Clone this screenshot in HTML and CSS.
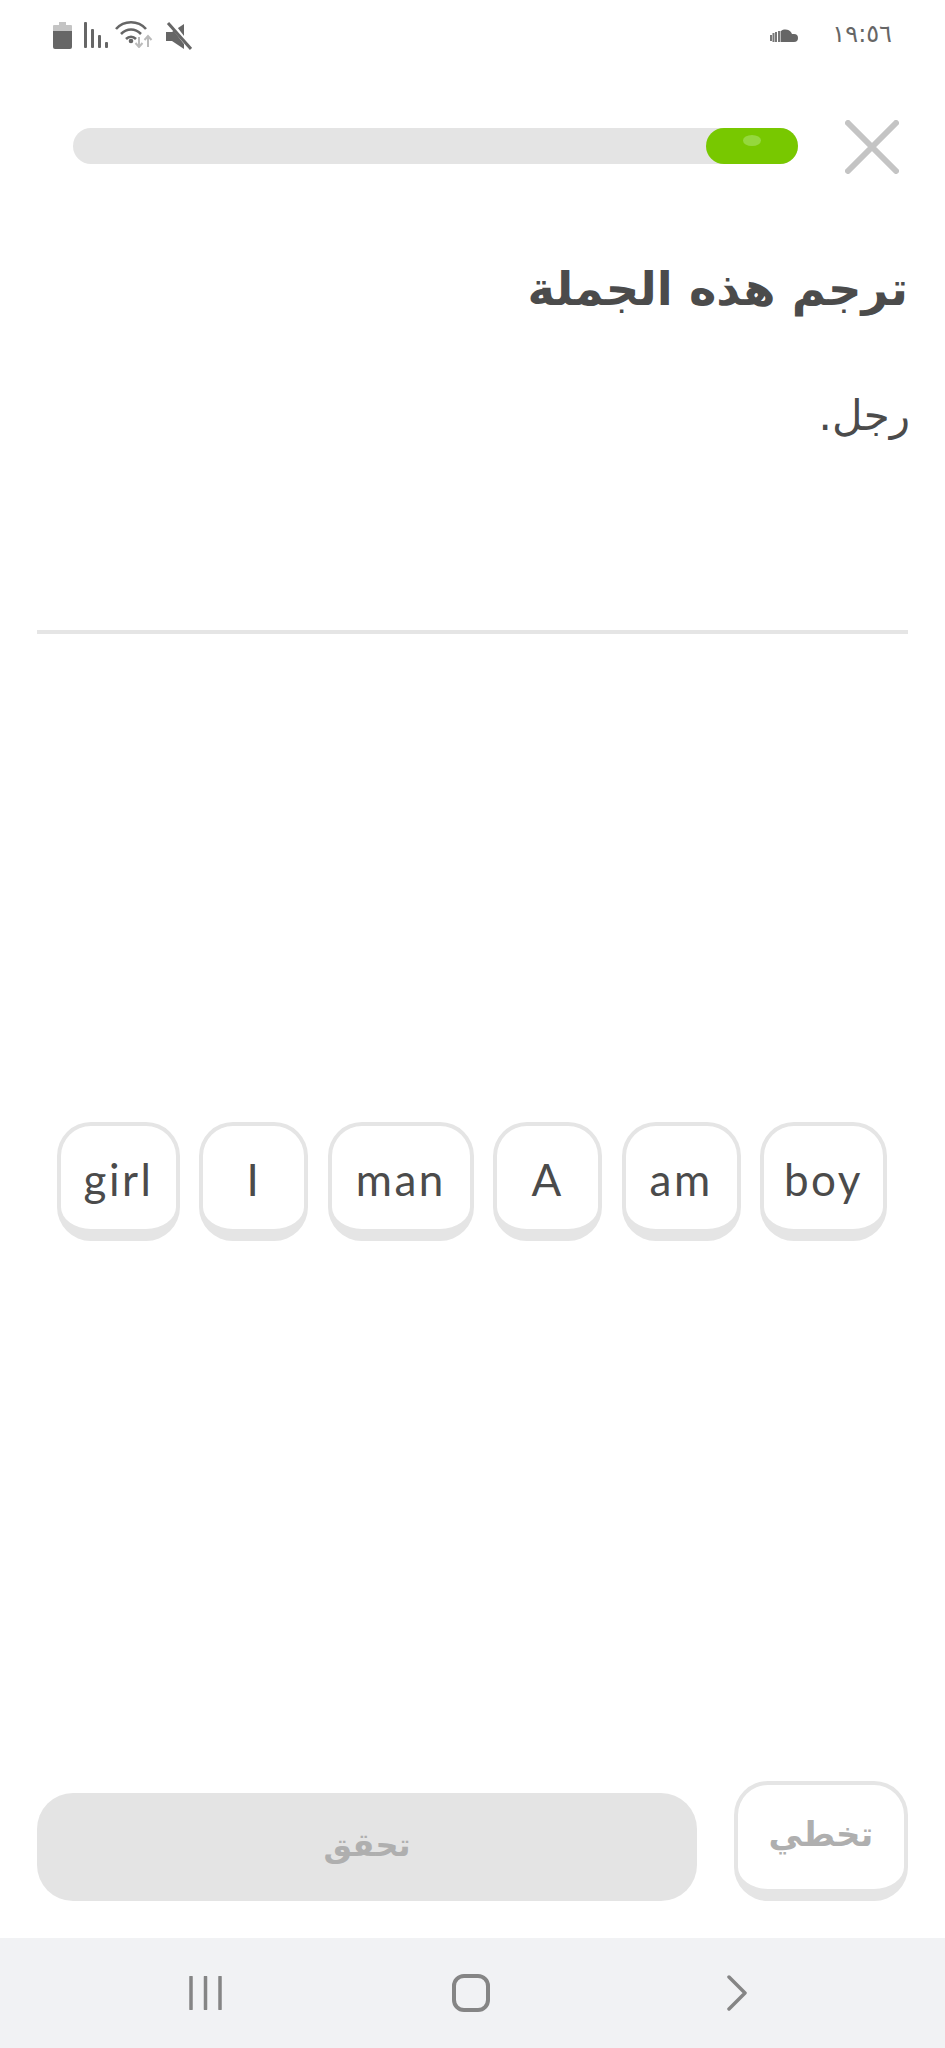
FILE: index.html
```html
<!DOCTYPE html>
<html lang="ar">
<head>
<meta charset="utf-8">
<title>ترجم هذه الجملة</title>
<link rel="stylesheet" href="styles.css">
</head>
<body>
<div class="app">
  <div class="status">
    <div class="status-left">
      <svg class="ic-battery" width="19" height="27" viewBox="0 0 19 27"><path d="M6 0h7v3h5a1 1 0 0 1 1 1v5H0V4a1 1 0 0 1 1-1h5z" fill="#c4c4c4"/><path d="M0 9h19v16a2 2 0 0 1-2 2H2a2 2 0 0 1-2-2z" fill="#666"/></svg>
      <svg class="ic-signal" width="24" height="26" viewBox="0 0 24 26"><g fill="#666"><rect x="0" y="0" width="3" height="26" rx="1"/><rect x="7" y="7" width="3" height="19" rx="1"/><rect x="14" y="13" width="3" height="13" rx="1"/><rect x="21" y="20" width="3" height="6" rx="1"/></g></svg>
      <svg class="ic-wifi" width="38" height="28" viewBox="0 0 38 28"><g fill="none" stroke="#666" stroke-width="2.6"><path d="M1 9C9 0 23 0 31 9"/><path d="M6 14c6-6 14-6 20 0"/><path d="M11 19c3-3 7-3 10 0"/></g><circle cx="16" cy="21" r="2.3" fill="#666"/><g fill="none" stroke="#bbb" stroke-width="2"><path d="M24 17v10M20.500 23l3.500 4 3.500-4"/><path d="M33 27V16M29.500 20l3.500-4 3.500 4"/></g></svg>
      <svg class="ic-mute" width="26" height="28" viewBox="0 0 26 28"><path d="M0 10h6L18 2v25L6 19H0z" fill="#666"/><path d="M4 0l21 27" stroke="#fff" stroke-width="5"/><path d="M2 1l23 26" stroke="#666" stroke-width="3"/></svg>
    </div>
    <div class="status-right">
      <svg class="ic-cloud" width="28" height="14" viewBox="0 0 28 14"><path d="M11 14V3a7 7 0 0 1 11 3h2a4 4 0 0 1 0 8z" fill="#666"/><g fill="#777"><rect x="0" y="7" width="2" height="6"/><rect x="2.500" y="5" width="2" height="9"/><rect x="5" y="4" width="2" height="10"/><rect x="8" y="3" width="2.500" height="11"/></g></svg>
      <span class="clock">١٩:٥٦</span>
    </div>
  </div>

  <div class="lesson-head">
    <div class="progress"><div class="progress-fill"><span class="progress-shine"></span></div></div>
    <svg class="ic-close" width="54" height="54" viewBox="0 0 54 54"><path d="M3 3l48 48M51 3L3 51" stroke="#c4c4c4" stroke-width="6" stroke-linecap="round"/></svg>
  </div>

  <div class="prompt" dir="rtl">
    <h1 class="title">ترجم هذه الجملة</h1>
    <p class="sentence">رجل.</p>
    <div class="divider"></div>
  </div>

  <div class="bank">
    <button class="chip">girl</button>
    <button class="chip">I</button>
    <button class="chip">man</button>
    <button class="chip">A</button>
    <button class="chip">am</button>
    <button class="chip">boy</button>
  </div>

  <div class="actions">
    <button class="check">تحقق</button>
    <button class="skip">تخطي</button>
  </div>

  <nav class="sysnav">
    <svg width="34" height="34" viewBox="0 0 34 34"><path d="M2 1v32M16.500 1v32M31 1v32" stroke="#858585" stroke-width="3.500" stroke-linecap="round"/></svg>
    <svg class="nav-home" width="38" height="38" viewBox="0 0 38 38"><rect x="2" y="2" width="34" height="34" rx="10" fill="none" stroke="#858585" stroke-width="4"/></svg>
    <svg width="22" height="36" viewBox="0 0 22 36"><path d="M3 2l16 16L3 34" fill="none" stroke="#858585" stroke-width="3.500" stroke-linecap="round" stroke-linejoin="round"/></svg>
  </nav>
</div>
</body>
</html>
```
FILE: styles.css
```css
* { box-sizing: border-box; }
html, body { margin: 0; padding: 0; background: #fff; }
.app {
  width: 945px;
  height: 2048px;
  display: flex;
  flex-direction: column;
  overflow: hidden;
  font-family: "DejaVu Sans", "Noto Sans", sans-serif;
  color: #4b4b4b;
}
.status {
  height: 60px;
  padding: 20px 53px 0 53px;
  display: flex;
  justify-content: space-between;
  align-items: flex-start;
}
.status-left { display: flex; align-items: flex-start; }
.ic-battery { margin-top: 2px; }
.ic-signal { margin: 2px 0 0 12px; }
.ic-wifi { margin: 0 0 0 7px; }
.ic-mute { margin: 2px 0 0 13px; }
.status-right { display: flex; align-items: center; gap: 34px; }
.ic-cloud { margin-top: 2px; }
.clock { font-size: 24px; line-height: 28px; color: #666; letter-spacing: 1px; }

.lesson-head {
  margin-top: 60px;
  padding: 0 46px 0 73px;
  height: 54px;
  display: flex;
  align-items: flex-start;
  justify-content: space-between;
}
.progress {
  width: 725px;
  height: 36px;
  margin-top: 8px;
  border-radius: 18px;
  background: #e4e4e4;
  display: flex;
  justify-content: flex-end;
}
.progress-fill {
  width: 92px;
  height: 36px;
  border-radius: 18px;
  background: #78c800;
  display: flex;
  justify-content: center;
  padding-top: 7px;
}
.progress-shine {
  width: 18px;
  height: 11px;
  border-radius: 50%;
  background: #95d83e;
}

.prompt { padding: 0 37px; margin-top: 80px; }
.title {
  margin: 0;
  font-size: 46.500px;
  line-height: 70px;
  font-weight: 700;
  color: #4b4b4b;
}
.sentence {
  margin: 62px -2px 0 0;
  font-size: 42px;
  line-height: 60px;
  font-weight: 400;
}
.divider {
  margin-top: 184px;
  height: 4px;
  background: #e5e5e5;
}

.bank {
  margin: 488px 58px 0 57px;
  display: grid;
  grid-template-columns: 123px 109px 146px 109px 119px 127px;
  justify-content: space-between;
}
.chip {
  height: 119px;
  padding: 3px 0 0;
  border: 4px solid #e5e5e5;
  border-bottom-width: 12px;
  border-radius: 34px;
  background: #fff;
  font-family: "Lato", sans-serif;
  font-size: 44px;
  letter-spacing: 2.500px;
  color: #4b4b4b;
}

.actions {
  margin-top: 540px;
  padding: 0 37px;
  display: flex;
  justify-content: space-between;
  align-items: flex-end;
}
.check {
  width: 660px;
  height: 108px;
  border: 0;
  padding: 0 0 4px;
  border-radius: 36px;
  background: #e4e4e4;
  color: #afafaf;
  font-family: "DejaVu Sans", sans-serif;
  font-size: 32px;
  font-weight: 700;
}
.skip {
  width: 174px;
  height: 120px;
  padding: 0 0 6px;
  border: 4px solid #e5e5e5;
  border-bottom-width: 12px;
  border-radius: 34px;
  background: #fff;
  color: #afafaf;
  font-family: "DejaVu Sans", sans-serif;
  font-size: 34px;
  font-weight: 700;
}

.sysnav {
  margin-top: auto;
  height: 110px;
  background: #f1f2f4;
  padding: 0 197px 0 189px;
  display: flex;
  align-items: center;
  gap: 229px;
}
.nav-home { margin-right: 7px; }
```
